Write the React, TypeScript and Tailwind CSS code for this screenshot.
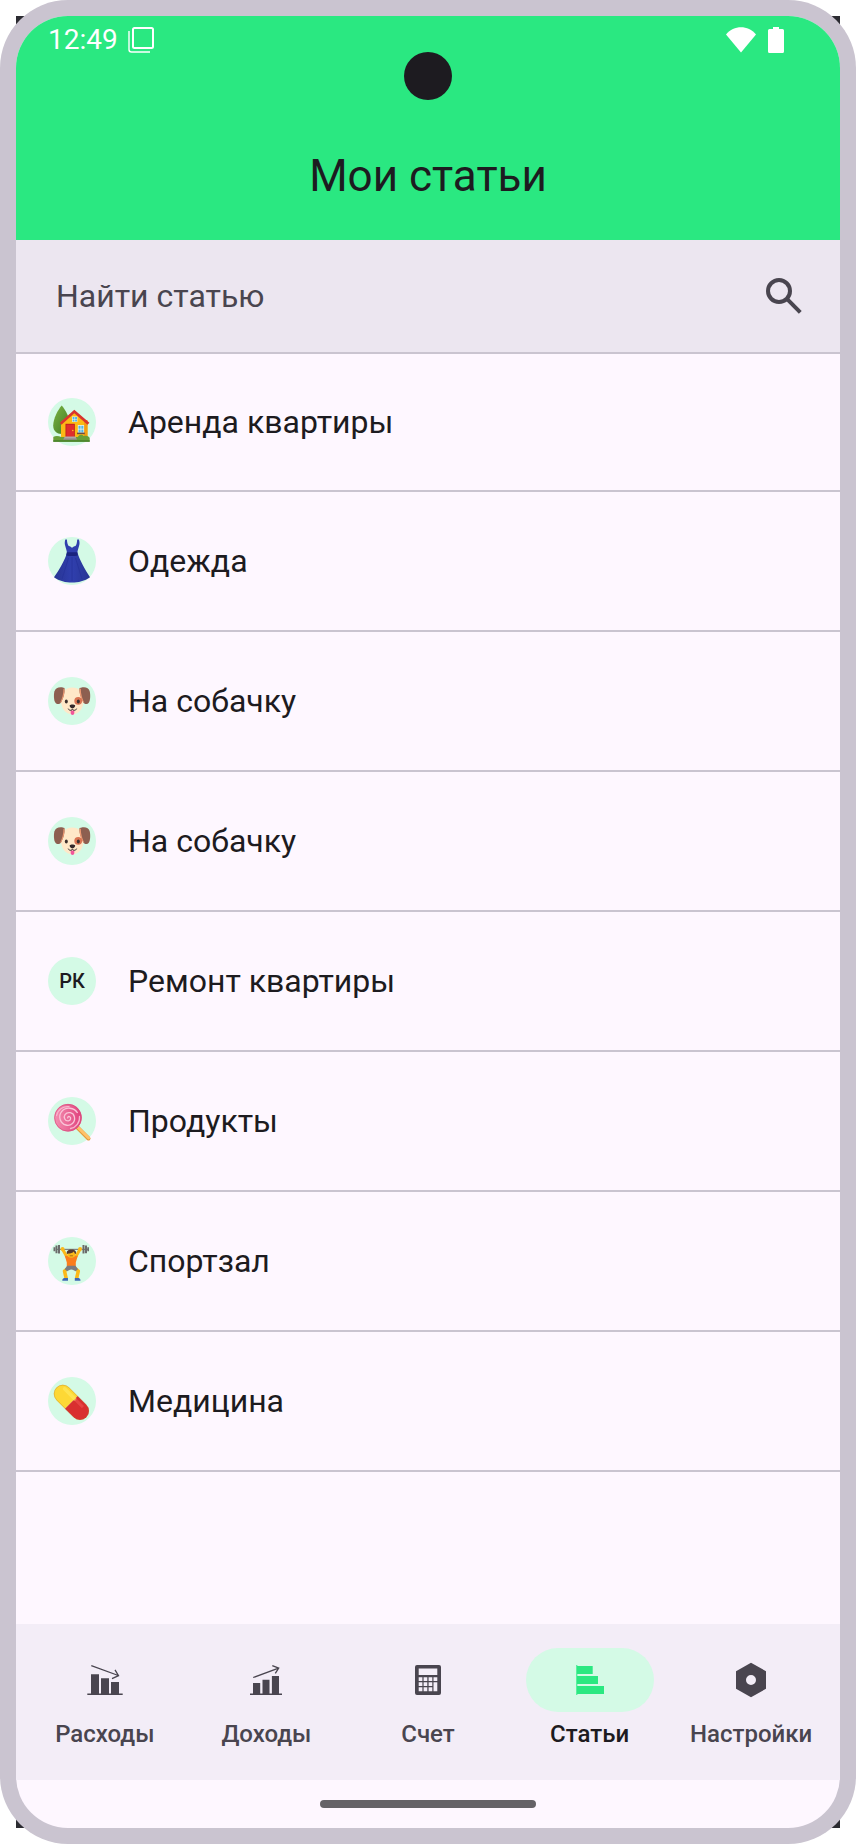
import { useState, type ReactNode } from "react";

function HouseEmoji() {
  return (
    <svg viewBox="0 0 48 48" className="size-12" aria-hidden="true">
      <defs>
        <linearGradient id="tree" x1="0" y1="0" x2="1" y2="1">
          <stop offset="0" stopColor="#7cb342" />
          <stop offset="1" stopColor="#3f7a25" />
        </linearGradient>
      </defs>
      <path d="M13.7 7.5C10 11.5 5.2 21 5.2 27.5c0 5.5 3.5 8.5 8.5 8.5s8.500-3 8.500-8.500C22.200 21 17.500 11.500 13.700 7.500Z" fill="url(#tree)" />
      <path d="M13 24 26.300 13 39.500 24v17H13Z" fill="#fbb916" />
      <path d="M36 22h3.500v19H36Z" fill="#f39c12" />
      <path d="M26.300 11.800 11.800 24.800l1.700 2 12.800-11.600 13.200 11.600 1.900-2Z" fill="#d8352f" />
      <rect x="24" y="18.500" width="5.400" height="5.400" fill="#f5f5e6" />
      <path d="M24.600 19h1.900v2h-1.900zM27.100 19H29v2h-1.900zM24.600 21.500h1.900v2h-1.900zM27.100 21.500H29v2h-1.900z" fill="#4fb7ea" />
      <rect x="17.500" y="25.800" width="9.300" height="13.400" fill="#b71c1c" />
      <rect x="18.300" y="26.600" width="7.700" height="12.600" fill="#e02d2d" />
      <circle cx="24.800" cy="32.500" r="0.700" fill="#ffca28" />
      <rect x="29.800" y="27" width="6.300" height="8" fill="#f5f5e6" />
      <path d="M30.500 27.700h2.100v3h-2.100zM33.300 27.700h2.100v3h-2.100zM30.500 31.400h2.100v3h-2.100zM33.300 31.400h2.100v3h-2.100z" fill="#4fb7ea" />
      <rect x="29" y="34.600" width="7.800" height="1.600" fill="#6d4c41" />
      <path d="M5.300 43.800V39c2-1.500 5-1.500 8 0h16.500c1.500-2.500 4-2.800 6-1 3-1 5.500.5 5.900 2v3.800Z" fill="#689f38" />
      <path d="M5.300 42.300h36.400v1.500H5.300Z" fill="#47802a" />
      <path d="M16.800 38.500h10.800l1 3H15.500Z" fill="#b0a8a8" />
      <path d="M15.500 40.500h13.200v1.300H15.500Z" fill="#8d8585" />
    </svg>
  );
}

function DressEmoji() {
  return (
    <svg viewBox="0 0 48 48" className="size-12" aria-hidden="true">
      <defs>
        <linearGradient id="skirt" x1="0" y1="0" x2="1" y2="0">
          <stop offset="0" stopColor="#283593" />
          <stop offset="0.5" stopColor="#303fae" />
          <stop offset="1" stopColor="#283593" />
        </linearGradient>
      </defs>
      <path d="M19 15.500h10.500c2 7.500 7.500 17 12.500 24.700C37 44 30 45.500 24 45.500S11 44 6 40.200C11.500 32.500 17 23 19 15.500Z" fill="url(#skirt)" />
      <path d="M17.300 2.500h1.600c.2 3 .6 5 1.800 6.500 1.500.3 2.700 1 3.300 2 .7-1 2-1.700 3.500-2 1.200-1.600 1.500-3.500 1.700-6.500h1.700c.8 2.500.8 4.500.2 6.200-.6 2.300-1.500 4.500-1.800 7.300H19c-.3-2.800-1.200-5-1.800-7.300-.6-1.700-.6-3.700.1-6.200Z" fill="#303fae" />
      <path d="M18.800 15.200h10.400l.5 3.300c-3.500.8-8 .8-11.500 0Z" fill="#1a237e" />
      <path d="M20.500 21 14 42M24 20v24M27.500 21 34 42" stroke="#26329a" strokeWidth="0.800" fill="none" />
    </svg>
  );
}

function DogEmoji() {
  return (
    <svg viewBox="0 0 48 48" className="size-12" aria-hidden="true">
      <path d="M24.300 10.500c7.500 0 11 5 11.200 12.500.2 8-4.500 14.300-11.200 14.300S12.800 31 13 23c.2-7.500 3.800-12.500 11.300-12.500Z" fill="#ffe8c8" />
      <path d="M15.500 10.700c-4-1.200-8 0-9 3.500-.9 3.300-.8 8.800.8 11.300 1.500 2.300 4.800 2 6-.5 1.800-3.800 3.700-8 3.200-14Z" fill="#8d5f50" />
      <path d="M15.500 12c0 5-1.500 10-3.500 14l1.300-1c2-4 3.500-8 3.200-14Z" fill="#f09a72" />
      <path d="M33 10.700c4-1.200 7.800 0 8.700 3.500.8 3.300.8 8.800-.8 11.300-1.500 2.300-4.600 2-5.800-.5-1.800-3.800-4-8-3.600-14Z" fill="#8d5f50" />
      <path d="M32.800 12c0 5 1.500 10 3.500 14l-1.300-1c-2-4-3.800-8-3.400-14Z" fill="#f09a72" />
      <circle cx="30.200" cy="23.800" r="3.900" fill="#d97452" />
      <ellipse cx="18.300" cy="24.500" rx="1.500" ry="1.900" fill="#3b302d" />
      <ellipse cx="30.300" cy="24.500" rx="1.500" ry="1.900" fill="#3b302d" />
      <path d="M22.700 33.500h3.600v2.600c0 2.600-3.600 2.600-3.600 0Z" fill="#f0569b" />
      <path d="M21.700 28.300c1-1 4.400-1 5.400 0 .4 1.200-1 3.100-2.700 3.100s-3.100-1.900-2.700-3.100Z" fill="#33292a" />
      <path d="M20.300 32c.5 1.700 3.500 1.900 4.100 0 .7 1.900 3.600 1.700 4.100 0" fill="none" stroke="#33292a" strokeWidth="1" strokeLinecap="round" />
    </svg>
  );
}

function LollipopEmoji() {
  return (
    <svg viewBox="0 0 48 48" className="size-12" aria-hidden="true">
      <defs>
        <linearGradient id="candy" x1="0" y1="0" x2="1" y2="0">
          <stop offset="0" stopColor="#f48fb1" />
          <stop offset="1" stopColor="#e0417c" />
        </linearGradient>
      </defs>
      <path d="M28.500 29.500 40.500 41.500" stroke="#e39a3b" strokeWidth="4" strokeLinecap="round" />
      <path d="M28.800 29.200 40.700 41.100" stroke="#ffc26b" strokeWidth="2.800" strokeLinecap="round" />
      <circle cx="20" cy="20.700" r="13.700" fill="url(#candy)" />
      <path d="M20 21.500c-.8-1.200.3-2.300 1.400-1.900 2.100.8 1.400 4-1 4.300-3.400.4-5.200-3.500-3.400-6.200 2.600-3.700 8.500-2.300 9.400 2.200 1.200 5.400-3.600 9.400-8.500 8.100-5.900-1.600-8-8.800-4.300-13.300 4.200-5.300 12.600-4.300 16 1.300" fill="none" stroke="#f9c5d8" strokeWidth="1.300" />
      <path d="M8.500 18.500c1.500-6 7-9.600 12.500-8.800M31.500 19.500c.6 6-3.500 11-9 12" fill="none" stroke="#f7b4cd" strokeWidth="1.300" strokeLinecap="round" />
      <circle cx="20" cy="20.700" r="13.400" fill="none" stroke="#d74c7d" strokeWidth="0.700" />
    </svg>
  );
}

function LifterEmoji() {
  return (
    <svg viewBox="0 0 48 48" className="size-12" aria-hidden="true">
      <path d="M8 11.800h32v1.100H8Z" fill="#757575" />
      <path d="M5.500 10.300h1.700v4H5.500zM7.500 8.500h2v7.800h-2zM10 8h2v8.500h-2zM34.500 8h2v8.500h-2zM37 8.500h2v7.800h-2zM39.300 10.300H41v4h-1.700z" fill="#6b6b6b" />
      <path d="m14.900 12.800 4.500 8M31.700 12.800l-4.500 8" stroke="#fbb91a" strokeWidth="3" strokeLinecap="round" />
      <circle cx="14.500" cy="12" r="2" fill="#fbb91a" />
      <circle cx="32.100" cy="12" r="2" fill="#fbb91a" />
      <path d="M16.800 18.800c1.800 0 3 .6 3.700.7h5.600c.9-.1 2.100-.7 3.700-.7l-2 6.800V30h-9v-4.400Z" fill="#fb7d1c" />
      <circle cx="23.300" cy="16.800" r="4" fill="#fbb91a" />
      <path d="M19 17c-1-3 1.300-4.500 4.500-4.500s5.300 1.500 4.300 4.500c-1 0-1.500-1.500-2-2.500-1 1.500-3.500 2-5.300 2Z" fill="#543930" />
      <path d="M21.700 18.800h3.200" stroke="#8d4f16" strokeWidth="0.700" />
      <path d="M19.500 31.500 16.500 34l1.700 7.500M27.300 31.500l3 2.500-1.700 7.500" stroke="#fbb91a" strokeWidth="3.500" fill="none" strokeLinejoin="round" />
      <path d="M19.200 28.800h8.300l2.500 3.500-2.500 2c-1-.5-2.500-1.700-4.200-1.700s-3 1.200-4.200 1.700l-2.400-2Z" fill="#7b7b80" />
      <path d="M16 41h4v2.700h-5.700c-.1-1.500.6-2.200 1.700-2.700ZM26.800 41h4c1.100.5 1.800 1.200 1.700 2.700h-5.700Z" fill="#3f68b5" />
    </svg>
  );
}

function PillEmoji() {
  return (
    <svg viewBox="0 0 48 48" className="size-12" aria-hidden="true">
      <g transform="rotate(45 23.300 25.300)">
        <path d="M23.300 16.300h-12a9 9 0 0 0 0 18h12Z" fill="#fdd835" />
        <path d="M23.300 16.300h12.300a9 9 0 0 1 0 18H23.300Z" fill="#d92f2f" />
        <path d="M9 20.500h14.300" stroke="#ffe95c" strokeWidth="3.500" strokeLinecap="round" opacity="0.700" />
        <path d="M24 20.500h11" stroke="#ef5350" strokeWidth="3" opacity="0.600" />
        <rect x="2.600" y="16.600" width="41.600" height="17.400" rx="8.700" fill="none" stroke="#b5701f" strokeWidth="0.500" opacity="0.600" />
      </g>
    </svg>
  );
}

type Article = { id: number; title: string; icon?: ReactNode; short?: string };

const articles: Article[] = [
  { id: 1, title: "Аренда квартиры", icon: <HouseEmoji /> },
  { id: 2, title: "Одежда", icon: <DressEmoji /> },
  { id: 3, title: "На собачку", icon: <DogEmoji /> },
  { id: 4, title: "На собачку", icon: <DogEmoji /> },
  { id: 5, title: "Ремонт квартиры", short: "РК" },
  { id: 6, title: "Продукты", icon: <LollipopEmoji /> },
  { id: 7, title: "Спортзал", icon: <LifterEmoji /> },
  { id: 8, title: "Медицина", icon: <PillEmoji /> },
];

const tabs: { label: string; icon: ReactNode }[] = [
  {
    label: "Расходы",
    icon: (
      <>
        <path d="M10 18.300h8V38h-8zM20 22.300h8V38h-8zM30 26h8v12h-8zM6.300 37.400h35.400V39H6.300z" fill="currentColor" />
        <path d="m10.300 9.700 27 9.800M34 13.800l3.500 5.800-6.500 3" fill="none" stroke="currentColor" strokeWidth="1.300" />
      </>
    ),
  },
  {
    label: "Доходы",
    icon: (
      <>
        <path d="M11 27h7.200v11H11zM20.500 23.700h7V38h-7zM29.900 20H37v18h-7.100zM8 37.400h32V39H8z" fill="currentColor" />
        <path d="m11.200 21.500 25.400-9.300M30.300 9.600l6.400 2.500-3.400 5.300" fill="none" stroke="currentColor" strokeWidth="1.300" />
      </>
    ),
  },
  {
    label: "Счет",
    icon: (
      <path
        fill="currentColor"
        fillRule="evenodd"
        d="M13 9h22a2 2 0 0 1 2 2v26a2 2 0 0 1-2 2H13a2 2 0 0 1-2-2V11a2 2 0 0 1 2-2ZM14.700 12.600V19h18.600v-6.400ZM14.700 21.200v3.900h3.700v-3.900ZM19.600 21.200v3.900h3.700v-3.900ZM24.600 21.200v3.900h3.700v-3.900ZM29.500 21.200v3.900h3.800v-3.900ZM14.700 26.300V30h3.700v-3.700ZM19.600 26.300V30h3.700v-3.700ZM24.600 26.300V30h3.700v-3.700ZM29.500 26.300v9h3.800v-9ZM14.700 31.300v4h3.700v-4ZM19.600 31.300v4h3.700v-4ZM24.600 31.300v4h3.700v-4Z"
      />
    ),
  },
  {
    label: "Статьи",
    icon: <path d="M10.300 9h1v30h-1zM10.300 10h16.400v8H10.300zM10.300 20h21.700v8H10.300zM10.300 30H38v8H10.300z" fill="currentColor" />,
  },
  {
    label: "Настройки",
    icon: (
      <path
        fill="currentColor"
        fillRule="evenodd"
        d="M24 6.800 39 15.200v17.600L24 41.200 9 32.800V15.200ZM24 19a5 5 0 1 0 0 10 5 5 0 0 0 0-10Z"
      />
    ),
  },
];

function StatusBar() {
  return (
    <div className="flex h-12 items-center justify-between pr-14 pl-8 text-white">
      <div className="flex items-center gap-2.5">
        <span className="text-[28px] leading-8">12:49</span>
        <svg viewBox="0 0 28 28" className="size-7" fill="none" stroke="currentColor" aria-hidden="true">
          <rect x="5" y="2" width="20" height="20" rx="1.500" strokeWidth="2" />
          <path d="M1 5v18.500c0 1.700.8 2.500 2.500 2.500H22" strokeWidth="1.400" />
        </svg>
      </div>
      <div className="flex items-center gap-3">
        <svg viewBox="0 0 30 26" className="h-[26px] w-[30px]" aria-hidden="true">
          <path d="M15 25.500 0 7.500C8-2.200 22-2.200 30 7.500Z" fill="currentColor" />
        </svg>
        <svg viewBox="0 0 16 26" className="h-[26px] w-4" aria-hidden="true">
          <path d="M5 0h6v2h3.500A1.500 1.500 0 0 1 16 3.500v21a1.500 1.500 0 0 1-1.500 1.500h-13A1.500 1.500 0 0 1 0 24.500v-21A1.500 1.500 0 0 1 1.500 2H5Z" fill="currentColor" />
        </svg>
      </div>
    </div>
  );
}

export default function App() {
  const [active, setActive] = useState("Статьи");
  const [query, setQuery] = useState("");
  const visible = articles.filter((a) => a.title.toLowerCase().includes(query.toLowerCase()));

  return (
    <div className="relative isolate flex min-h-screen flex-col bg-white font-['Roboto',sans-serif] text-[#1d1b20]">
      <div className="absolute inset-4 -z-10 bg-[#2b2b31]" />
      <div className="flex flex-1 flex-col rounded-[68px] bg-[#cac4d0] p-4">
        <div className="relative flex flex-1 flex-col overflow-hidden rounded-[52px] bg-[#fef7ff]">
          <header className="bg-[#2ae881]">
            <StatusBar />
            <div className="absolute top-9 left-1/2 size-12 -translate-x-1/2 rounded-full bg-[#1d1b20]" />
            <h1 className="mt-12 flex h-32 items-center justify-center text-[44px] leading-[56px]">Мои статьи</h1>
          </header>

          <form
            className="flex h-[114px] items-center border-b-2 border-[#cac4d0] bg-[#ece6f0] pr-8 pl-10 text-[#49454f]"
            onSubmit={(e) => e.preventDefault()}
          >
            <input
              type="text"
              aria-label="Найти статью"
              placeholder="Найти статью"
              value={query}
              onChange={(e) => setQuery(e.target.value)}
              className="min-w-0 flex-1 bg-transparent text-[32px] leading-10 outline-none placeholder:text-[#49454f]"
            />
            <button type="submit" aria-label="Найти">
              <svg viewBox="0 0 48 48" className="size-12" fill="none" stroke="currentColor" strokeWidth="4" aria-hidden="true">
                <circle cx="19" cy="19" r="11" />
                <path d="M26.700 26.700 40.300 40.300" />
              </svg>
            </button>
          </form>

          <main className="flex-1">
            <ul>
              {visible.map((a) => (
                <li
                  key={a.id}
                  className="flex h-[140px] items-center gap-8 border-b-2 border-[#cac4d0] px-8 first:h-[138px]"
                >
                  <span className="flex size-12 shrink-0 items-center justify-center rounded-full bg-[#d4fae6] text-xl font-medium">
                    {a.icon ?? a.short}
                  </span>
                  <span className="text-[32px] leading-10">{a.title}</span>
                </li>
              ))}
            </ul>
          </main>

          <nav className="flex h-[156px] bg-[#f3edf7] px-2 pt-6">
            {tabs.map((tab) => {
              const on = tab.label === active;
              return (
                <button
                  key={tab.label}
                  type="button"
                  aria-current={on ? "page" : undefined}
                  onClick={() => setActive(tab.label)}
                  className="flex min-w-0 flex-1 flex-col items-center gap-1.5"
                >
                  <span
                    className={
                      on
                        ? "flex h-16 w-32 items-center justify-center rounded-full bg-[#d4fae6] text-[#2ae881]"
                        : "flex h-16 w-32 items-center justify-center rounded-full text-[#49454f]"
                    }
                  >
                    <svg viewBox="0 0 48 48" className="size-12" aria-hidden="true">
                      {tab.icon}
                    </svg>
                  </span>
                  <span
                    className={
                      on
                        ? "text-2xl leading-8 font-medium text-[#1d1b20]"
                        : "text-2xl leading-8 font-medium text-[#49454f]"
                    }
                  >
                    {tab.label}
                  </span>
                </button>
              );
            })}
          </nav>

          <footer className="flex h-12 items-center justify-center">
            <div className="h-2 w-[216px] rounded-full bg-[#656267]" />
          </footer>
        </div>
      </div>
    </div>
  );
}
